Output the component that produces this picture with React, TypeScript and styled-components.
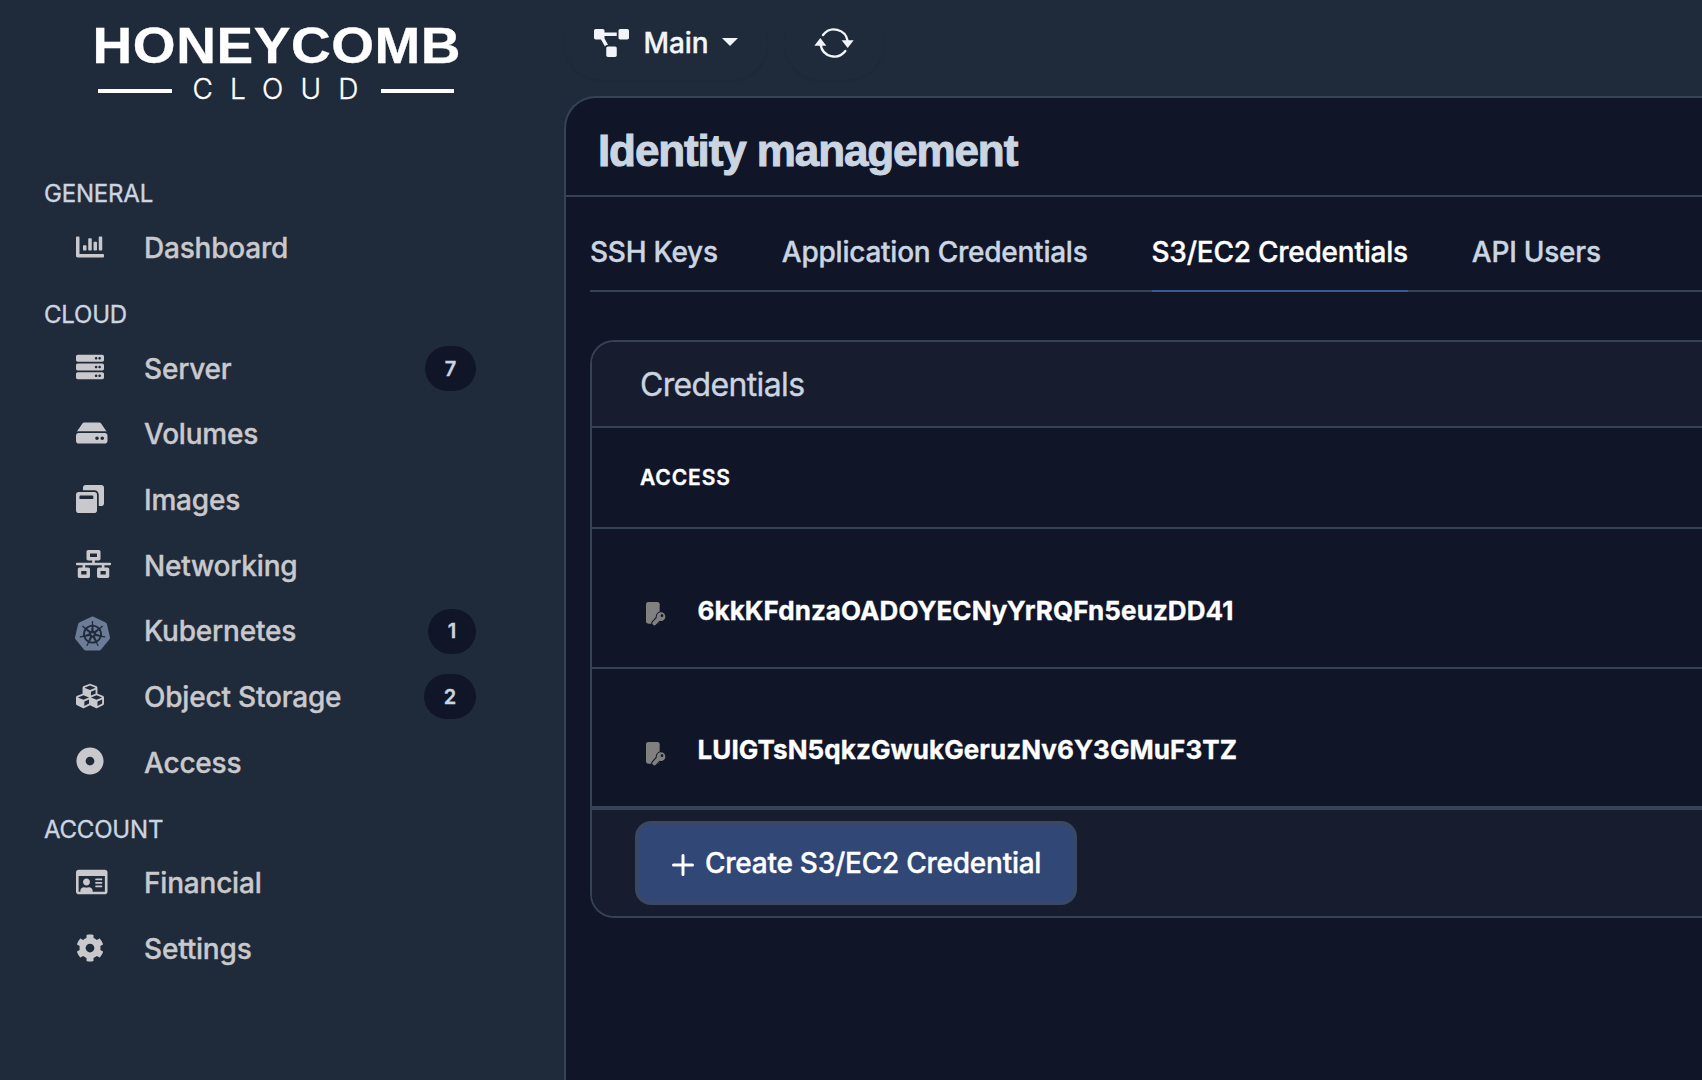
import React from 'react';
import styled, { createGlobalStyle } from 'styled-components';
import type { IconType } from 'react-icons';
import {
  FaChartBar,
  FaServer,
  FaHdd,
  FaWindowRestore,
  FaNetworkWired,
  FaCubes,
  FaDotCircle,
  FaRegIdCard,
  FaCog,
  FaProjectDiagram,
} from 'react-icons/fa';
import { SiKubernetes } from 'react-icons/si';

const color = {
  shell: '#1f2a3a',
  surface: '#101627',
  raised: '#171d2e',
  line: '#364256',
  heading: '#cbd5e1',
  nav: '#c9c9cd',
  bright: '#f1f5f9',
  accent: '#314776',
};

const GlobalStyle = createGlobalStyle`
  *, *::before, *::after { box-sizing: border-box; }
  body {
    margin: 0;
    background: ${color.shell};
    font-family: Inter, "Liberation Sans", sans-serif;
    -webkit-text-stroke: 0.35px currentColor;
    overflow: hidden;
  }
  svg { display: block; flex: none; }
`;

const Shell = styled.div`
  display: flex;
  width: 100vw;
  height: 100vh;
  overflow: hidden;
  background: ${color.shell};
`;

/* Sidebar */

const Sidebar = styled.aside`
  flex: none;
  width: 564px;
  padding: 20.7px 88px 0 44px;
`;

const Logo = styled.div`
  width: 366px;
  height: 139.1px;
  margin-left: 48px;
  color: #fff;
  white-space: nowrap;
`;

const LogoName = styled.div`
  padding-left: 0.5px;
  font-family: "Liberation Sans", Arial, sans-serif;
  font-size: 50px;
  line-height: 50px;
  font-weight: 700;
  letter-spacing: 0.5px;
  transform: scaleX(1.1);
  transform-origin: left;
`;

const LogoSub = styled.div`
  display: flex;
  align-items: center;
  margin: 4.6px 0 0 6px;
  font-size: 28px;
  line-height: 28px;
`;

const LogoWord = styled.span`
  width: 186px;
  margin: 0 2px 0 21px;
  font-weight: 300;
  letter-spacing: 17.1px;
`;

const LogoRule = styled.span`
  width: 73.5px;
  height: 4px;
  margin-top: 3px;
  background: #fff;
`;

const NavHeading = styled.h2`
  display: flex;
  align-items: center;
  height: 55.2px;
  margin: 0;
  padding-top: 12.2px;
  font-size: 24px;
  font-weight: 400;
  letter-spacing: -0.2px;
  color: ${color.heading};
`;

const NavItem = styled.a`
  display: flex;
  align-items: center;
  height: 65.67px;
  padding-left: 32px;
  font-size: 28px;
  font-weight: 500;
  letter-spacing: -0.2px;
  color: ${color.nav};
`;

const NavIcon = styled.span<{ $width: number; $height: number; $nudge: number; $tint?: string }>`
  display: flex;
  width: 68px;
  margin-top: ${(p) => p.$nudge * 2}px;
  color: ${(p) => p.$tint ?? color.nav};

  svg {
    width: ${(p) => p.$width}px;
    height: ${(p) => p.$height}px;
    margin-left: ${(p) => (p.$height > 28 ? -1.3 : 0)}px;
  }
`;

const NavLabel = styled.span`
  flex: 1;
`;

const Badge = styled.span`
  display: flex;
  align-items: center;
  height: 45px;
  padding: 0 19.8px;
  border-radius: 23px;
  background: ${color.surface};
  font-size: 20px;
  font-weight: 600;
  letter-spacing: 0;
  color: ${color.heading};
`;

/* Top bar */

const Content = styled.div`
  flex: 1;
  min-width: 0;
  display: flex;
  flex-direction: column;
`;

const TopBar = styled.header`
  display: flex;
  gap: 16px;
  height: 96px;
  padding-top: 5px;
`;

const PillButton = styled.button<{ $width: number }>`
  display: flex;
  align-items: center;
  justify-content: center;
  width: ${(p) => p.$width}px;
  height: 75px;
  padding: 0;
  border: 0;
  border-radius: 38px;
  background: ${color.shell};
  box-shadow: 0 2px 2px rgba(0, 0, 0, 0.035);
  font: 500 28px Inter, sans-serif;
  letter-spacing: -0.15px;
  color: ${color.bright};
`;

const ProjectIcon = styled(FaProjectDiagram)`
  width: 35px;
  height: 28px;
`;

const ProjectName = styled.span`
  margin: 0 14px 0 15px;
`;

const Caret = styled.span`
  border: 8px solid transparent;
  border-top-color: ${color.bright};
  border-bottom-width: 0;
  margin-top: -1px;
`;

/* Page */

const Page = styled.main`
  flex: 1;
  border: solid ${color.line};
  border-width: 2px 0 0 2px;
  border-top-left-radius: 32px;
  background: ${color.surface};
`;

const PageHeader = styled.div`
  display: flex;
  align-items: center;
  height: 99px;
  padding: 10px 0 0 32px;
  border-bottom: 2px solid ${color.line};
`;

const Title = styled.h1`
  margin: 0;
  font: 700 44px/1.1 "Liberation Sans", Arial, sans-serif;
  letter-spacing: -1.1px;
  -webkit-text-stroke: 1px ${color.heading};
  color: ${color.heading};
`;

const PageBody = styled.div`
  padding: 17px 0 0 24px;
`;

const Tabs = styled.nav`
  display: flex;
  gap: 64px;
  height: 78px;
  border-bottom: 2px solid ${color.line};
`;

const Tab = styled.a<{ $active?: boolean }>`
  display: flex;
  align-items: center;
  height: 78px;
  border-bottom: 2px solid ${(p) => (p.$active ? '#3b5998' : 'transparent')};
  font-size: 28px;
  font-weight: 500;
  letter-spacing: -0.24px;
  white-space: nowrap;
  color: ${(p) => (p.$active ? '#fff' : color.heading)};
`;

const Card = styled.section`
  margin-top: 48px;
  border: 2px solid ${color.line};
  border-right: 0;
  border-radius: 24px 0 0 24px;
  overflow: hidden;
`;

const CardHeader = styled.div`
  display: flex;
  align-items: center;
  height: 86px;
  padding-left: 48px;
  border-bottom: 2px solid ${color.line};
  background: ${color.raised};
  font-size: 32px;
  letter-spacing: -0.65px;
  color: ${color.heading};
`;

const ColumnHeader = styled.div`
  display: flex;
  align-items: center;
  height: 101px;
  padding-left: 48px;
  border-bottom: 2px solid ${color.line};
  font-size: 21px;
  font-weight: 600;
  letter-spacing: 0.9px;
  color: #fff;
`;

const KeyRow = styled.div`
  display: flex;
  align-items: center;
  gap: 31.5px;
  height: 139.5px;
  padding: 25px 0 0 54px;
  border-bottom: 2px solid ${color.line};
  font-size: 26px;
  font-weight: 700;
  letter-spacing: 0.08px;
  color: #fff;

  svg { margin-top: 8px; }
`;

const CardFooter = styled.div`
  display: flex;
  align-items: center;
  height: 108px;
  padding-left: 43px;
  border-top: 2px solid ${color.line};
  background: ${color.raised};
`;

const CreateButton = styled.button`
  display: flex;
  align-items: center;
  width: 442px;
  height: 84px;
  padding: 0 0 0 32.5px;
  border: solid #394867;
  border-width: 4px;
  border-radius: 16px;
  background: ${color.accent};
  font: 500 28px Inter, sans-serif;
  letter-spacing: -0.25px;
  white-space: nowrap;
  color: #fff;

  svg { margin: 4px 11.5px 0 0; }
`;

const RefreshIcon = () => (
  <svg width="40" height="32" viewBox="148 36 120 96" fill="none" stroke="currentColor" strokeWidth="7" strokeLinecap="round">
    <path d="M175 60A41.5 41.5 0 0 1 249 78" />
    <path d="M242 108A41.5 41.5 0 0 1 168 90" />
    <path d="M231 76h36l-18 23z" fill="currentColor" stroke="none" />
    <path d="M149 92h36l-18-23z" fill="currentColor" stroke="none" />
  </svg>
);

const CredentialIcon = () => (
  <svg width="20" height="24" viewBox="0 0 60 72">
    <rect x="0" y="0" width="41" height="65" rx="7" fill="#808080" />
    <g stroke={color.surface} strokeWidth="18" strokeLinecap="round">
      <path d="M40 47L25 64" />
      <circle cx="45" cy="44" r="6" fill={color.surface} strokeWidth="20" />
    </g>
    <path d="M38 50L25 64" stroke="#808080" strokeWidth="12" strokeLinecap="round" />
    <circle cx="45" cy="44" r="13" fill="#808080" />
    <circle cx="48" cy="41" r="4" fill={color.surface} />
  </svg>
);

const PlusIcon = () => (
  <svg width="22" height="22" viewBox="0 0 22 22" stroke="currentColor" strokeWidth="3" strokeLinecap="round">
    <path d="M11 1.5v19M1.5 11h19" />
  </svg>
);

interface NavEntry {
  label: string;
  icon: IconType;
  width?: number;
  height?: number;
  nudge?: number;
  tint?: string;
  count?: number;
}

const sections: { title: string; items: NavEntry[] }[] = [
  { title: 'GENERAL', items: [{ label: 'Dashboard', icon: FaChartBar, nudge: -0.8 }] },
  {
    title: 'CLOUD',
    items: [
      { label: 'Server', icon: FaServer, count: 7 },
      { label: 'Volumes', icon: FaHdd, width: 31.5 },
      { label: 'Images', icon: FaWindowRestore },
      { label: 'Networking', icon: FaNetworkWired, width: 35 },
      { label: 'Kubernetes', icon: SiKubernetes, width: 35, height: 35, nudge: 2, tint: '#6c7b96', count: 1 },
      { label: 'Object Storage', icon: FaCubes, count: 2 },
      { label: 'Access', icon: FaDotCircle },
    ],
  },
  {
    title: 'ACCOUNT',
    items: [
      { label: 'Financial', icon: FaRegIdCard, width: 31.5 },
      { label: 'Settings', icon: FaCog },
    ],
  },
];

const tabs = ['SSH Keys', 'Application Credentials', 'S3/EC2 Credentials', 'API Users'];
const keys = ['6kkKFdnzaOADOYECNyYrRQFn5euzDD41', 'LUIGTsN5qkzGwukGeruzNv6Y3GMuF3TZ'];

export default function App() {
  return (
    <Shell>
      <GlobalStyle />
      <Sidebar>
        <Logo>
          <LogoName>HONEYCOMB</LogoName>
          <LogoSub>
            <LogoRule />
            <LogoWord>CLOUD</LogoWord>
            <LogoRule />
          </LogoSub>
        </Logo>
        {sections.map((section) => (
          <React.Fragment key={section.title}>
            <NavHeading>{section.title}</NavHeading>
            {section.items.map(({ label, icon: Icon, width = 28, height = 28, nudge = -1.3, tint, count }) => (
              <NavItem key={label}>
                <NavIcon $width={width} $height={height} $nudge={nudge} $tint={tint}>
                  <Icon />
                </NavIcon>
                <NavLabel>{label}</NavLabel>
                {count !== undefined && <Badge>{count}</Badge>}
              </NavItem>
            ))}
          </React.Fragment>
        ))}
      </Sidebar>
      <Content>
        <TopBar>
          <PillButton $width={204}>
            <ProjectIcon />
            <ProjectName>Main</ProjectName>
            <Caret />
          </PillButton>
          <PillButton $width={100}>
            <RefreshIcon />
          </PillButton>
        </TopBar>
        <Page>
          <PageHeader>
            <Title>Identity management</Title>
          </PageHeader>
          <PageBody>
            <Tabs>
              {tabs.map((tab) => (
                <Tab key={tab} $active={tab === 'S3/EC2 Credentials'}>
                  {tab}
                </Tab>
              ))}
            </Tabs>
            <Card>
              <CardHeader>Credentials</CardHeader>
              <ColumnHeader>ACCESS</ColumnHeader>
              {keys.map((key) => (
                <KeyRow key={key}>
                  <CredentialIcon />
                  {key}
                </KeyRow>
              ))}
              <CardFooter>
                <CreateButton>
                  <PlusIcon />
                  Create S3/EC2 Credential
                </CreateButton>
              </CardFooter>
            </Card>
          </PageBody>
        </Page>
      </Content>
    </Shell>
  );
}
